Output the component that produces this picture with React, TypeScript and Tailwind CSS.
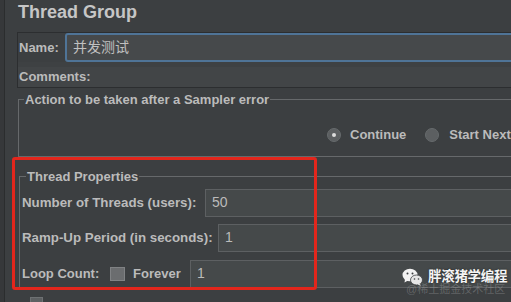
import React from "react";

const FONT = "font-['Liberation_Sans','Noto_Sans_CJK_SC',Arial,sans-serif]";

function Radio({ checked }: { checked?: boolean }) {
  return (
    <span className="w-[14px] h-[14px] rounded-full bg-[#5c5f61] border border-[#666a6c] flex items-center justify-center shrink-0">
      {checked && <span className="w-[4px] h-[4px] rounded-full bg-[#dcdcdc]" />}
    </span>
  );
}

function Field({ value }: { value: string }) {
  return (
    <div className="flex-1 h-full bg-[#45494a] border border-[#5d6062] flex items-center pl-[6px] text-[14px] text-[#bbbbbb] font-normal">
      {value}
    </div>
  );
}

function WeChatIcon() {
  return (
    <svg width="21" height="18" viewBox="0 0 21 18">
      <ellipse cx="8" cy="7" rx="7.5" ry="6.3" fill="#f2f2f2" />
      <path d="M3 11.5 L2.5 14.5 L6 12.5 Z" fill="#f2f2f2" />
      <circle cx="5.5" cy="5.5" r="1" fill="#3c3f41" />
      <circle cx="10.5" cy="5.5" r="1" fill="#3c3f41" />
      <ellipse cx="14.5" cy="12" rx="6" ry="5" fill="#e6e6e6" stroke="#3c3f41" strokeWidth="0.8" />
      <path d="M17.5 15.5 L19 17.8 L15.5 16.5 Z" fill="#e6e6e6" />
      <circle cx="12.5" cy="11" r="0.8" fill="#3c3f41" />
      <circle cx="16.5" cy="11" r="0.8" fill="#3c3f41" />
    </svg>
  );
}

export default function App() {
  return (
    <div className={`w-[511px] h-[302px] overflow-hidden bg-[#3c3f41] flex relative ${FONT} text-[13px] font-bold text-[#bbbbbb]`}>
      {/* left strip */}
      <div className="w-[5px] shrink-0 bg-[#36383a] border-r border-[#2b2d2e]" />

      {/* main */}
      <div className="flex-1 min-w-0 flex flex-col pl-[12px]">
        <div className="h-[24px] leading-[24px] text-[18px] font-bold text-[#c6c6c6] pl-[1px] mb-[8px]">
          Thread Group
        </div>

        {/* Name panel */}
        <div className="h-[57px] border-t border-l border-b border-[#2c2e30] flex flex-col mr-[-6px]">
          <div className="h-[29px] flex items-center">
            <span className="w-[47px] pl-[1px] shrink-0">Name:</span>
            <div className="flex-1 h-full bg-[#46494b] border-2 border-[#4f7497] rounded-[3px] flex items-center pl-[6px] text-[14px] font-normal text-[#c0c0c0]">
              并发测试
            </div>
          </div>
          <div className="h-[5px] bg-[#3e4143]" />
          <div className="flex-1 flex items-center bg-[#424547]">
            <span className="pl-[1px]">Comments:</span>
          </div>
        </div>

        {/* Action fieldset */}
        <fieldset className="mt-[4px] ml-[1px] border-t border-l border-b border-[#66696b] mr-[-6px]">
          <legend className="ml-[5px] px-[1px] leading-[16px] h-[16px]">Action to be taken after a Sampler error</legend>
          <div className="mt-[17px] h-[20px] flex items-center pl-[308px] mb-[11px] whitespace-nowrap">
            <Radio checked />
            <span className="ml-[9px]">Continue</span>
            <span className="ml-[19px]"><Radio /></span>
            <span className="ml-[10px]">Start Next</span>
          </div>
        </fieldset>

        {/* Thread properties */}
        <fieldset className="mt-[12px] ml-[2px] border-t border-l border-[#66696b] mr-[-6px]">
          <legend className="ml-[6px] px-[1px] leading-[16px] h-[16px]">Thread Properties</legend>
          <div className="flex flex-col gap-[7px] mt-[4px] pl-[2px] whitespace-nowrap">
            <div className="h-[28px] flex items-center">
              <span className="w-[183px] shrink-0 text-[13.3px]">Number of Threads (users):</span>
              <Field value="50" />
            </div>
            <div className="h-[28px] flex items-center">
              <span className="w-[196px] shrink-0 text-[13.3px]">Ramp-Up Period (in seconds):</span>
              <Field value="1" />
            </div>
            <div className="h-[28px] flex items-center mt-[1px]">
              <span className="w-[88px] shrink-0">Loop Count:</span>
              <span className="w-[15px] h-[14px] bg-[#6b6d6f] border border-[#808284] shrink-0" />
              <span className="ml-[8px] w-[57px] shrink-0">Forever</span>
              <Field value="1" />
            </div>
          </div>
        </fieldset>

        <div className="mt-[9px] ml-[13px] w-[13px] h-[13px] bg-[#5d6062] border border-[#6e7173] shrink-0" />
      </div>

      {/* red annotation box */}
      <div className="absolute left-[12px] top-[157px] w-[305px] h-[133px] border-[3px] border-[#e3261c] rounded-[3px] pointer-events-none" />

      {/* watermark */}
      <div className="absolute left-[402px] top-[267px] flex items-center gap-[5px]">
        <WeChatIcon />
        <span className="text-[13.5px] font-bold text-[#f4f4f4] tracking-[-0.3px] [text-shadow:0_0_2px_rgba(0,0,0,0.6)]">胖滚猪学编程</span>
      </div>
      <div className="absolute left-[406px] top-[281px] text-[11px] font-normal text-[rgba(200,200,200,0.28)] whitespace-nowrap">
        @稀土掘金技术社区
      </div>
    </div>
  );
}
